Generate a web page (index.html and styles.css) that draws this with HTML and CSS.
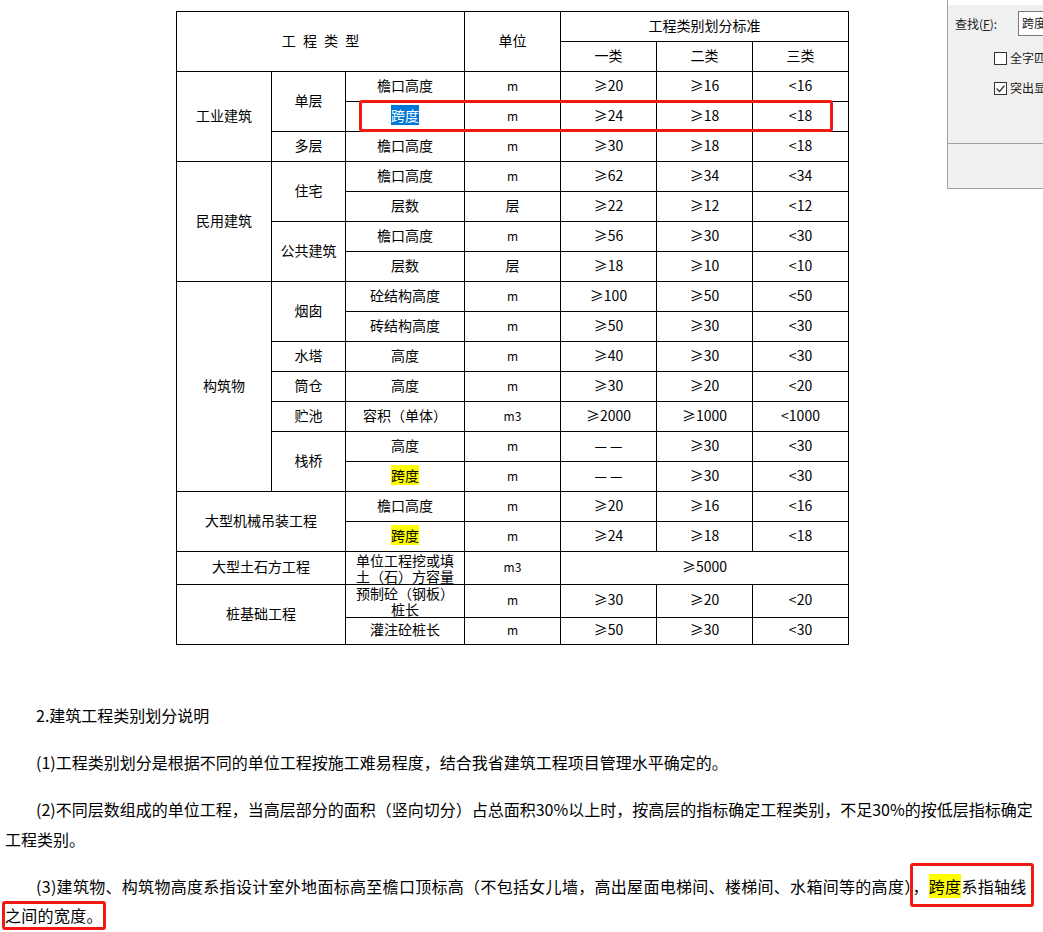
FILE: index.html
```html
<!DOCTYPE html>
<html lang="zh">
<head>
<meta charset="utf-8">
<title>建筑工程类别划分</title>
<link rel="stylesheet" href="styles.css">
</head>
<body>
<div class="page">
  <div class="table-wrap">
    <table class="grade">
      <colgroup>
        <col class="c1"><col class="c2"><col class="c3"><col class="c4"><col class="c5"><col class="c6"><col class="c7">
      </colgroup>
      <tr>
        <td colspan="3" rowspan="2" class="spaced">工 程 类 型</td>
        <td rowspan="2">单位</td>
        <td colspan="3">工程类别划分标准</td>
      </tr>
      <tr><td>一类</td><td>二类</td><td>三类</td></tr>

      <tr><td rowspan="3">工业建筑</td><td rowspan="2">单层</td><td>檐口高度</td><td class="u">m</td><td>≥20</td><td>≥16</td><td>&lt;16</td></tr>
      <tr><td><span class="sel">跨度</span></td><td class="u">m</td><td>≥24</td><td>≥18</td><td>&lt;18</td></tr>
      <tr><td>多层</td><td>檐口高度</td><td class="u">m</td><td>≥30</td><td>≥18</td><td>&lt;18</td></tr>

      <tr><td rowspan="4">民用建筑</td><td rowspan="2">住宅</td><td>檐口高度</td><td class="u">m</td><td>≥62</td><td>≥34</td><td>&lt;34</td></tr>
      <tr><td>层数</td><td>层</td><td>≥22</td><td>≥12</td><td>&lt;12</td></tr>
      <tr><td rowspan="2">公共建筑</td><td>檐口高度</td><td class="u">m</td><td>≥56</td><td>≥30</td><td>&lt;30</td></tr>
      <tr><td>层数</td><td>层</td><td>≥18</td><td>≥10</td><td>&lt;10</td></tr>

      <tr><td rowspan="7">构筑物</td><td rowspan="2">烟囱</td><td>砼结构高度</td><td class="u">m</td><td>≥100</td><td>≥50</td><td>&lt;50</td></tr>
      <tr><td>砖结构高度</td><td class="u">m</td><td>≥50</td><td>≥30</td><td>&lt;30</td></tr>
      <tr><td>水塔</td><td>高度</td><td class="u">m</td><td>≥40</td><td>≥30</td><td>&lt;30</td></tr>
      <tr><td>筒仓</td><td>高度</td><td class="u">m</td><td>≥30</td><td>≥20</td><td>&lt;20</td></tr>
      <tr><td>贮池</td><td>容积（单体）</td><td class="u">m3</td><td>≥2000</td><td>≥1000</td><td>&lt;1000</td></tr>
      <tr><td rowspan="2">栈桥</td><td>高度</td><td class="u">m</td><td>— —</td><td>≥30</td><td>&lt;30</td></tr>
      <tr><td><span class="hl">跨度</span></td><td class="u">m</td><td>— —</td><td>≥30</td><td>&lt;30</td></tr>

      <tr><td colspan="2" rowspan="2">大型机械吊装工程</td><td>檐口高度</td><td class="u">m</td><td>≥20</td><td>≥16</td><td>&lt;16</td></tr>
      <tr><td><span class="hl">跨度</span></td><td class="u">m</td><td>≥24</td><td>≥18</td><td>&lt;18</td></tr>

      <tr class="tall"><td colspan="2">大型土石方工程</td><td class="two">单位工程挖或填土（石）方容量</td><td class="u">m3</td><td colspan="3">≥5000</td></tr>

      <tr class="tall"><td colspan="2" rowspan="2">桩基础工程</td><td class="two">预制砼（钢板）桩长</td><td class="u">m</td><td>≥30</td><td>≥20</td><td>&lt;20</td></tr>
      <tr class="short"><td>灌注砼桩长</td><td class="u">m</td><td>≥50</td><td>≥30</td><td>&lt;30</td></tr>
    </table>
  </div>

  <div class="notes">
    <p>2.建筑工程类别划分说明</p>
    <p>(1)工程类别划分是根据不同的单位工程按施工难易程度，结合我省建筑工程项目管理水平确定的。</p>
    <p>(2)不同层数组成的单位工程，当高层部分的面积（竖向切分）占总面积30%以上时，按高层的指标确定工程类别，不足30%的按低层指标确定<br>工程类别。</p>
    <p class="wide">(3)建筑物、构筑物高度系指设计室外地面标高至檐口顶标高（不包括女儿墙，高出屋面电梯间、楼梯间、水箱间等的高度）<span class="boxed boxed-a">，<span class="hl">跨度</span>系指轴线</span><br><span class="boxed boxed-b">之间的宽度。</span></p>
  </div>

  <div class="mark mark-row"></div>

  <div class="find-dialog">
    <div class="find-body">
      <div class="find-row">
        <span class="find-label">查找(<u>F</u>):</span>
        <span class="find-input">跨度</span>
      </div>
      <div class="check-row">
        <span class="cbox"></span><span>全字匹配</span>
      </div>
      <div class="check-row">
        <span class="cbox"><svg width="11" height="11" viewBox="0 0 11 11"><path d="M1.5 5.5 L4.5 8.5 L9.5 2.5" fill="none" stroke="#333" stroke-width="1.2"/></svg></span><span>突出显示</span>
      </div>
      <div class="find-foot"></div>
    </div>
  </div>
</div>
</body>
</html>
```

FILE: styles.css
```css
* { box-sizing: border-box; }
html, body { margin: 0; padding: 0; background: #fff; }
body {
  font-family: "Noto Sans CJK SC", "Noto Sans", sans-serif;
  color: #000;
}
.page {
  position: relative;
  width: 1043px;
  height: 932px;
  overflow: hidden;
}
.table-wrap {
  padding: 11px 0 0 176px;
}
.grade {
  border-collapse: collapse;
  table-layout: fixed;
  width: 673px;
  font-size: 14px;
  line-height: 15px;
}
.grade .c1 { width: 95px; }
.grade .c2 { width: 74px; }
.grade .c3 { width: 119px; }
.grade .c4, .grade .c5, .grade .c6, .grade .c7 { width: 96px; }
.grade tr { height: 30px; }
.grade tr.tall { height: 33px; }
.grade tr.short { height: 27px; }
.grade td {
  border: 1px solid #000;
  padding: 0 0 3px;
  text-align: center;
  vertical-align: middle;
  white-space: nowrap;
}
.grade td.two {
  white-space: normal;
  line-height: 16px;
  padding: 0 4px;
}
.grade td.spaced { word-spacing: 4px; }
.grade td.u { font-size: 12px; }
.sel { background: #0078d7; color: #fff; }
.hl { background: #ffff00; }

.notes {
  margin-top: 56px;
  padding-left: 5px;
  font-size: 16px;
  line-height: 29.5px;
}
.notes p {
  margin: 0 0 17.5px;
  text-indent: 31px;
}
.notes p.wide { letter-spacing: 0.3px; }

.boxed { position: relative; }
.boxed::after {
  content: "";
  position: absolute;
  border: 3px solid #f01a14;
  border-radius: 3px;
}
.boxed-a::after { left: -3px; right: -7px; top: -11px; bottom: -9px; }
.boxed-b::after { left: -3px; right: -3px; top: -2px; bottom: -3px; }

.mark {
  position: absolute;
  border: 3px solid #f01a14;
  border-radius: 3px;
}
.mark-row { left: 359px; top: 100px; width: 474px; height: 32px; }

.find-dialog {
  position: absolute;
  left: 947px;
  top: 0;
  width: 96px;
  height: 189px;
  background: #fff;
  padding-top: 5px;
  border-left: 1px solid #a0a0a0;
  border-bottom: 1px solid #a0a0a0;
  font-size: 12px;
  line-height: 16px;
  color: #1a1a1a;
  overflow: hidden;
}
.find-body {
  background: #f0f0f0;
  height: 100%;
  display: flex;
  flex-direction: column;
  padding-top: 6px;
}
.find-row {
  display: flex;
  align-items: center;
  height: 25px;
  padding-left: 7px;
  white-space: nowrap;
}
.find-label { width: 63px; flex: none; }
.find-input {
  flex: none;
  width: 120px;
  height: 25px;
  background: #fff;
  border: 1px solid #7a7a7a;
  padding: 3px 0 0 3px;
}
.check-row {
  display: flex;
  align-items: center;
  gap: 3px;
  padding-left: 46px;
  height: 14px;
  white-space: nowrap;
  margin-top: 15px;
}
.check-row + .check-row { margin-top: 16px; }
.cbox {
  flex: none;
  width: 13px;
  height: 13px;
  border: 1px solid #333;
  background: #fff;
  display: flex;
  align-items: center;
  justify-content: center;
}
.cbox svg { display: block; }
.find-foot {
  margin-top: auto;
  height: 45px;
  border-top: 1px solid #a0a0a0;
}
```
